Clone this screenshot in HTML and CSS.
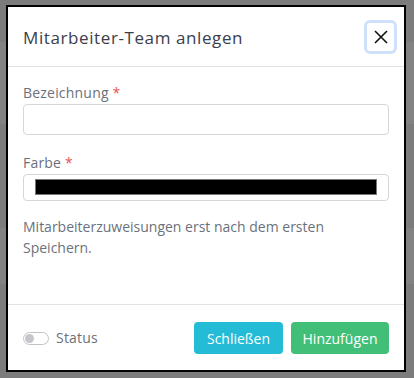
FILE: index.html
```html
<!DOCTYPE html>
<html lang="de">
<head>
    <meta charset="UTF-8">
    <meta name="viewport" content="width=device-width, initial-scale=1.0">
    <title>Mitarbeiter-Team anlegen</title>
    <link rel="stylesheet" href="styles.css">
</head>
<body>
    <div class="backdrop">
        <div class="stripe stripe-1"></div>
        <div class="stripe stripe-2"></div>
    </div>

    <div class="modal">
        <div class="modal-header">
            <h5 class="modal-title">Mitarbeiter-Team anlegen</h5>
            <button class="btn-close" type="button" aria-label="Schließen">
                <svg width="14" height="14" viewBox="0 0 14 14">
                    <path d="M1 1L13 13M13 1L1 13" stroke="#111" stroke-width="1.6" fill="none"/>
                </svg>
            </button>
        </div>

        <div class="modal-body">
            <div class="form-group">
                <label for="bezeichnung">Bezeichnung <span class="req">*</span></label>
                <input type="text" id="bezeichnung" class="form-control">
            </div>
            <div class="form-group">
                <label for="farbe">Farbe <span class="req">*</span></label>
                <div class="color-field">
                    <div class="color-swatch"></div>
                </div>
            </div>
            <p class="hint">Mitarbeiterzuweisungen erst nach dem ersten Speichern.</p>
        </div>

        <div class="modal-footer">
            <label class="switch">
                <span class="switch-track"><span class="switch-knob"></span></span>
                Status
            </label>
            <div class="actions">
                <button class="btn btn-info" type="button">Schließen</button>
                <button class="btn btn-success" type="button">Hinzufügen</button>
            </div>
        </div>
    </div>
</body>
</html>
```

FILE: styles.css
```css
* {
    margin: 0;
    padding: 0;
    box-sizing: border-box;
    font-family: 'Open Sans', 'Liberation Sans', sans-serif;
}

body {
    background: #7c7c7c;
    padding: 5px 8px 6px 6px;
    position: relative;
    min-height: 378px;
}

.backdrop {
    position: absolute;
    inset: 0;
}

.stripe {
    position: absolute;
    left: 0;
    right: 0;
    background: #838383;
}

.stripe-1 {
    top: 42px;
    height: 82px;
}

.stripe-2 {
    top: 228px;
    height: 56px;
}

.modal {
    position: relative;
    background: #fff;
    border: 2px solid #000;
    width: 400px;
    height: 367px;
    display: flex;
    flex-direction: column;
}

.modal-header {
    display: flex;
    align-items: center;
    justify-content: space-between;
    padding: 13px 7px 12px 15px;
    border-bottom: 1px solid #dfe3e8;
}

.modal-title {
    font-size: 17px;
    font-weight: 500;
    letter-spacing: 0.6px;
    color: #3a404c;
}

.btn-close {
    width: 33px;
    height: 34px;
    background: #fff;
    border: 3px solid #cfe0fb;
    border-radius: 6px;
    display: flex;
    align-items: center;
    justify-content: center;
}

.modal-body {
    padding: 15px 15px 0;
    flex: 1;
}

.form-group {
    margin-bottom: 17px;
}

label {
    display: block;
    font-size: 14px;
    line-height: 22px;
    color: #6b717b;
    letter-spacing: 0.2px;
}

.req {
    color: #e55353;
}

.form-control {
    display: block;
    width: 100%;
    height: 31px;
    border: 1px solid #d3d7dc;
    border-radius: 4px;
    background: #fff;
}

.color-field {
    height: 27px;
    border: 1px solid #d3d7dc;
    border-radius: 4px;
    padding: 4px 11px 5px 11px;
}

.color-swatch {
    height: 16px;
    background: #000;
    border: 1px solid #777;
}

.hint {
    margin-top: -2px;
    font-size: 14px;
    line-height: 21px;
    color: #6b717b;
    padding-right: 40px;
}

.modal-footer {
    display: flex;
    align-items: center;
    justify-content: space-between;
    padding: 17px 15px 16px;
    border-top: 1px solid #dfe3e8;
}

.switch {
    display: flex;
    align-items: center;
    gap: 7px;
    font-size: 14px;
    color: #6b717b;
}

.switch-track {
    width: 26px;
    height: 13px;
    border: 1px solid #bfc3c8;
    border-radius: 7px;
    padding: 1px;
    display: flex;
    align-items: center;
}

.switch-knob {
    width: 9px;
    height: 9px;
    border-radius: 50%;
    background: #c4c6c9;
}

.actions {
    display: flex;
    gap: 8px;
}

.btn {
    height: 32px;
    border: none;
    border-radius: 4px;
    color: #fff;
    font-size: 14px;
    font-weight: 500;
    padding: 0 10px;
}

.btn-info {
    background: #24bbd6;
    width: 89px;
}

.btn-success {
    background: #41bf79;
    width: 98px;
}
```
